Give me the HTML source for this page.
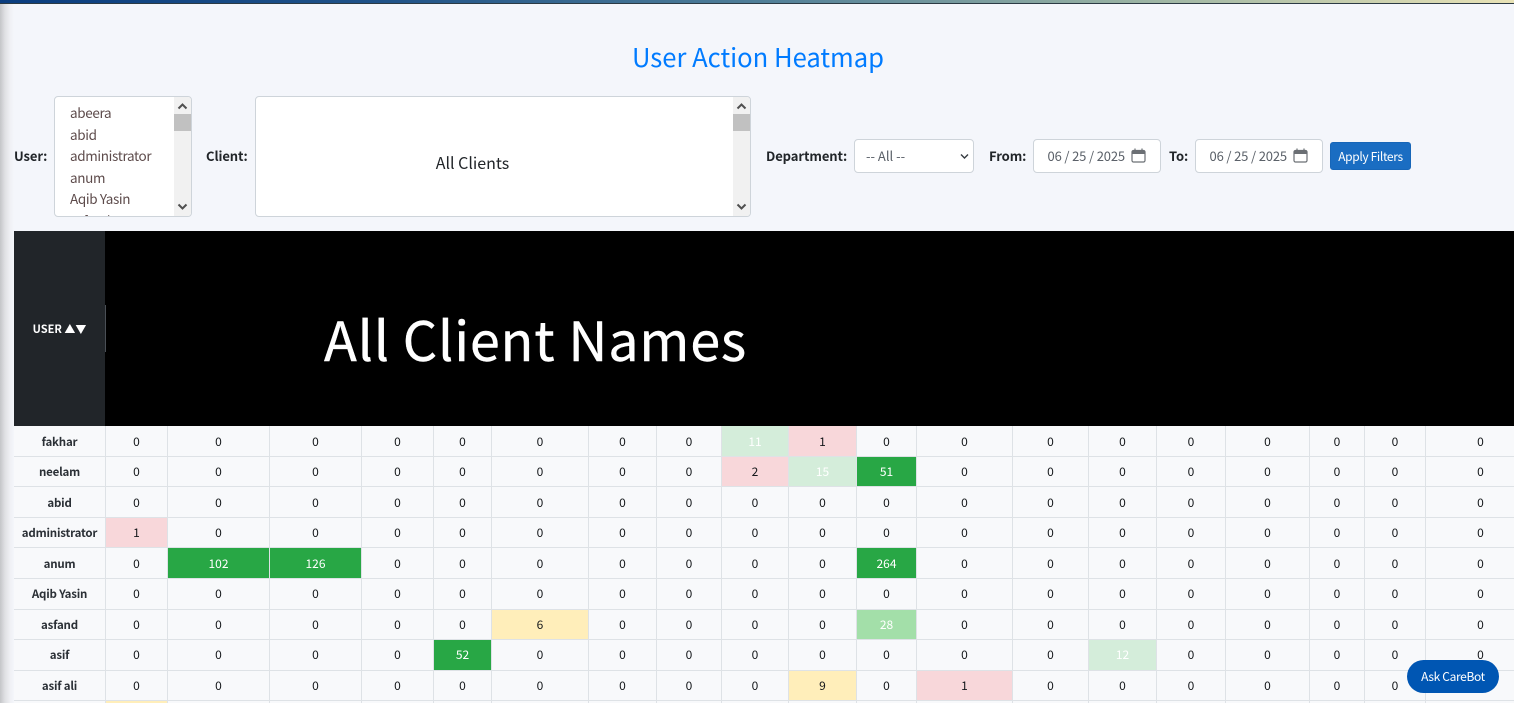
<!DOCTYPE html>
<html lang="en">
<head>
<meta charset="utf-8">
<title>User Action Heatmap</title>
<style>
*{box-sizing:border-box}
html,body{margin:0;padding:0;width:1514px;height:703px;overflow:hidden;background:#f4f6fb}
body{position:relative;font-family:"Noto Sans CJK SC","Liberation Sans",sans-serif;color:#212529}
.a{position:absolute;white-space:nowrap}
#top{left:0;top:0;width:1514px;height:4px;border-bottom:1px solid #2b3a44;background:linear-gradient(90deg,#0a3d7f 0%,#1f5288 25%,#4f7e98 50%,#9ab3a3 75%,#e9e3b6 100%);z-index:2}
#shade{left:0;top:0;width:14px;height:703px;background:linear-gradient(90deg,#c4c5c8 0%,#dfe0e3 35%,#f0f1f5 75%,#f4f6fb 100%);z-index:0}
h1{position:absolute;margin:0;left:508px;width:500px;top:38px;line-height:38px;text-align:center;font-size:25.6px;font-weight:400;color:#007bff}
.lb{font-size:13px;font-weight:700;line-height:18px;color:#212529;letter-spacing:-.08px}
.box{background:#fff;border:1px solid #ced4da;border-radius:4px;overflow:hidden}
.opt{position:absolute;left:15px;font-size:13.5px;letter-spacing:-.35px;line-height:20px;color:#5d4b4b}
.sb{position:absolute;right:0;top:0;bottom:0;width:17px;background:#f1f1f1}
.th{position:absolute;left:0;top:17px;width:17px;height:17px;background:#c1c1c1}
.sb svg{position:absolute;left:3px;width:11px;height:8px}
.ctl{background:#fff;border:1px solid #ced4da;border-radius:4px;height:34px;font-size:13px;line-height:32px;color:#5a6068}
.dt{letter-spacing:-.15px;padding-left:13.5px}
.cal{position:absolute;top:8px;left:97px;width:15px;height:15px}
#btn{left:1330px;top:142px;width:81px;height:28px;background:#1a6dc2;border:1px solid #1766b8;border-radius:3px;color:#fff;font-size:12px;letter-spacing:-.35px;line-height:27px;text-align:center}
#hdr{left:14px;top:231px;width:92px;height:195px;background:#212529;border-right:1px solid #3a3f45}
#hdrtx{left:14px;top:320px;width:91px;text-align:center;color:#fff;font-size:11px;font-weight:700;line-height:18px}
#grip{left:105px;top:305px;width:1px;height:47px;background:#4a4f55}
#img{left:105px;top:231px;width:1409px;height:195px;background:#000;color:#fff;overflow:hidden}
#img span{position:absolute;left:219px;top:71px;font-size:54px;letter-spacing:.8px;line-height:72px;color:#fff;-webkit-text-stroke:.4px #fff}
table{position:absolute;left:14px;top:426px;border-collapse:separate;border-spacing:0;table-layout:fixed;width:1522px;font-size:12px}
td,th{padding:1px 0 0;text-align:center;vertical-align:middle;background:#f8f9fb;border-right:1px solid #dee2e6;border-bottom:1px solid #dee2e6;font-weight:400;line-height:16px;color:#14171a}
th{font-weight:700;color:#2b3036;font-size:11.5px;letter-spacing:-.2px}
tr.u td,tr.u th{padding-top:0}
td.g{background:#28a745;color:#fff}
td.m{background:#a3dfa9;color:#fff}
td.l{background:#d4edda;color:#fff}
td.p{background:#f8d7da}
td.y{background:#ffeeba}
.h31{height:31px}.h30{height:30px}
#bot{left:1407px;top:660px;width:92px;height:33px;border-radius:17px;background:#0056b3;color:#fff;font-size:12px;letter-spacing:-.35px;line-height:33px;text-align:center;z-index:5}
</style>
</head>
<body>
<div class="a" id="top"></div>
<div class="a" id="shade"></div>
<h1>User Action Heatmap</h1>

<div class="a lb" style="left:14px;top:147px">User:</div>
<div class="a box" style="left:54px;top:96px;width:138px;height:121px">
  <div class="opt" style="top:5px">abeera</div>
  <div class="opt" style="top:27px">abid</div>
  <div class="opt" style="top:48px">administrator</div>
  <div class="opt" style="top:70px">anum</div>
  <div class="opt" style="top:91px">Aqib Yasin</div>
  <div class="opt" style="top:113px">asfand</div>
  <div class="sb"><div class="th"></div>
    <svg style="top:5px" viewBox="0 0 11 8"><path d="M1.5 6.5L5.5 2.5L9.5 6.5" fill="none" stroke="#505050" stroke-width="2"/></svg>
    <svg style="bottom:5px" viewBox="0 0 11 8"><path d="M1.5 1.5L5.5 5.5L9.5 1.5" fill="none" stroke="#505050" stroke-width="2"/></svg>
  </div>
</div>

<div class="a lb" style="left:206px;top:147px">Client:</div>
<div class="a box" style="left:255px;top:96px;width:496px;height:121px">
  <div class="a" style="left:0;width:433px;top:53px;text-align:center;font-size:16px;line-height:24px;color:#212529">All Clients</div>
  <div class="sb"><div class="th"></div>
    <svg style="top:5px" viewBox="0 0 11 8"><path d="M1.5 6.5L5.5 2.5L9.5 6.5" fill="none" stroke="#505050" stroke-width="2"/></svg>
    <svg style="bottom:5px" viewBox="0 0 11 8"><path d="M1.5 1.5L5.5 5.5L9.5 1.5" fill="none" stroke="#505050" stroke-width="2"/></svg>
  </div>
</div>

<div class="a lb" style="left:766px;top:147px">Department:</div>
<div class="a ctl" style="left:854px;top:139px;width:120px;padding-left:11px">-- All --
  <svg class="a" style="left:105px;top:13px;width:9px;height:7px" viewBox="0 0 9 7"><path d="M1 1.5L4.5 5L8 1.5" fill="none" stroke="#343a40" stroke-width="1.4"/></svg>
</div>

<div class="a lb" style="left:989px;top:147px">From:</div>
<div class="a ctl dt" style="left:1033px;top:139px;width:128px">06 / 25 / 2025
  <svg class="cal" viewBox="0 0 15 15"><rect x="1" y="2.5" width="13" height="11.5" rx="1.5" fill="none" stroke="#6b6f74" stroke-width="1.2"/><rect x="1" y="2.5" width="13" height="3.5" fill="#6b6f74"/><path d="M4 .5V3M11 .5V3" stroke="#6b6f74" stroke-width="1.2"/></svg>
</div>

<div class="a lb" style="left:1169px;top:147px">To:</div>
<div class="a ctl dt" style="left:1195px;top:139px;width:128px">06 / 25 / 2025
  <svg class="cal" viewBox="0 0 15 15"><rect x="1" y="2.5" width="13" height="11.5" rx="1.5" fill="none" stroke="#6b6f74" stroke-width="1.2"/><rect x="1" y="2.5" width="13" height="3.5" fill="#6b6f74"/><path d="M4 .5V3M11 .5V3" stroke="#6b6f74" stroke-width="1.2"/></svg>
</div>

<div class="a" id="btn">Apply Filters</div>

<div class="a" id="hdr"></div>
<div class="a" id="img"><span>All Client Names</span></div>
<div class="a" id="grip"></div>
<div class="a" id="hdrtx">USER ▲▼</div>

<table>
<colgroup><col style="width:92px"><col style="width:62px"><col style="width:102px"><col style="width:92px"><col style="width:72px"><col style="width:58px"><col style="width:97px"><col style="width:68px"><col style="width:65px"><col style="width:67px"><col style="width:68px"><col style="width:60px"><col style="width:96px"><col style="width:76px"><col style="width:68px"><col style="width:69px"><col style="width:84px"><col style="width:55px"><col style="width:61px"><col style="width:110px"></colgroup>
<tr class="h31"><th>fakhar</th><td>0</td><td>0</td><td>0</td><td>0</td><td>0</td><td>0</td><td>0</td><td>0</td><td class="l">11</td><td class="p">1</td><td>0</td><td>0</td><td>0</td><td>0</td><td>0</td><td>0</td><td>0</td><td>0</td><td>0</td></tr>
<tr class="h30"><th>neelam</th><td>0</td><td>0</td><td>0</td><td>0</td><td>0</td><td>0</td><td>0</td><td>0</td><td class="p">2</td><td class="l">15</td><td class="g">51</td><td>0</td><td>0</td><td>0</td><td>0</td><td>0</td><td>0</td><td>0</td><td>0</td></tr>
<tr class="h31"><th>abid</th><td>0</td><td>0</td><td>0</td><td>0</td><td>0</td><td>0</td><td>0</td><td>0</td><td>0</td><td>0</td><td>0</td><td>0</td><td>0</td><td>0</td><td>0</td><td>0</td><td>0</td><td>0</td><td>0</td></tr>
<tr class="h30"><th>administrator</th><td class="p">1</td><td>0</td><td>0</td><td>0</td><td>0</td><td>0</td><td>0</td><td>0</td><td>0</td><td>0</td><td>0</td><td>0</td><td>0</td><td>0</td><td>0</td><td>0</td><td>0</td><td>0</td><td>0</td></tr>
<tr class="h31"><th>anum</th><td>0</td><td class="g">102</td><td class="g">126</td><td>0</td><td>0</td><td>0</td><td>0</td><td>0</td><td>0</td><td>0</td><td class="g">264</td><td>0</td><td>0</td><td>0</td><td>0</td><td>0</td><td>0</td><td>0</td><td>0</td></tr>
<tr class="h31 u"><th>Aqib Yasin</th><td>0</td><td>0</td><td>0</td><td>0</td><td>0</td><td>0</td><td>0</td><td>0</td><td>0</td><td>0</td><td>0</td><td>0</td><td>0</td><td>0</td><td>0</td><td>0</td><td>0</td><td>0</td><td>0</td></tr>
<tr class="h30"><th>asfand</th><td>0</td><td>0</td><td>0</td><td>0</td><td>0</td><td class="y">6</td><td>0</td><td>0</td><td>0</td><td>0</td><td class="m">28</td><td>0</td><td>0</td><td>0</td><td>0</td><td>0</td><td>0</td><td>0</td><td>0</td></tr>
<tr class="h31 u"><th>asif</th><td>0</td><td>0</td><td>0</td><td>0</td><td class="g">52</td><td>0</td><td>0</td><td>0</td><td>0</td><td>0</td><td>0</td><td>0</td><td>0</td><td class="l">12</td><td>0</td><td>0</td><td>0</td><td>0</td><td>0</td></tr>
<tr class="h30"><th>asif ali</th><td>0</td><td>0</td><td>0</td><td>0</td><td>0</td><td>0</td><td>0</td><td>0</td><td>0</td><td class="y">9</td><td>0</td><td class="p">1</td><td>0</td><td>0</td><td>0</td><td>0</td><td>0</td><td>0</td><td>0</td></tr>
<tr class="h30"><th></th><td class="y"></td><td></td><td></td><td></td><td></td><td></td><td></td><td></td><td></td><td></td><td></td><td></td><td></td><td></td><td></td><td></td><td></td><td></td><td></td></tr>
</table>

<div class="a" id="bot">Ask CareBot</div>
</body>
</html>
